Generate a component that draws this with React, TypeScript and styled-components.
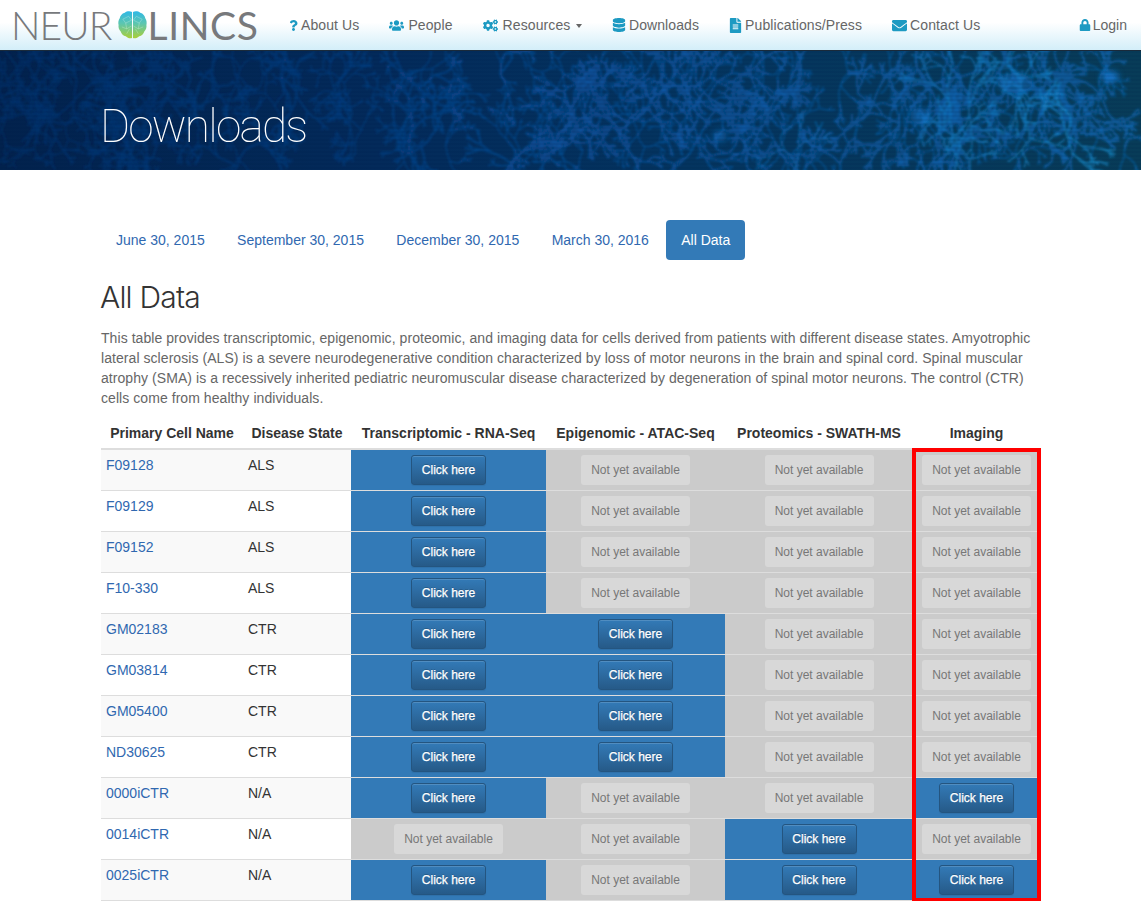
import { createGlobalStyle } from "styled-components"
import styled from "styled-components"
import { FaQuestion, FaUsers, FaCogs, FaDatabase, FaFileAlt, FaEnvelope, FaLock } from "react-icons/fa"

const GlobalStyle = createGlobalStyle`
    html, body {
        margin: 0;
        padding: 0;
        background: #fff;
        font-family: "Liberation Sans", Arial, sans-serif;
        font-size: 14px;
        line-height: 20px;
        color: #333;
    }
    * { box-sizing: border-box; }
`

// seeded so the banner comes out the same each time
const makeRng = (seed: number) => () => {
    seed |= 0
    seed = (seed + 0x6d2b79f5) | 0
    let t = Math.imul(seed ^ (seed >>> 15), 1 | seed)
    t = (t + Math.imul(t ^ (t >>> 7), 61 | t)) ^ t
    return ((t ^ (t >>> 14)) >>> 0) / 4294967296
}

const growBranch = (rng: () => number, x: number, y: number, angle: number, len: number, depth: number, out: string[]) => {
    let cx = x, cy = y, a = angle
    let d = `M${cx.toFixed(1)} ${cy.toFixed(1)}`
    const steps = 2 + Math.floor(rng() * 3)
    for (let i = 0; i < steps; i++) {
        a += (rng() - 0.5) * 0.7
        cx += Math.cos(a) * len / steps
        cy += Math.sin(a) * len / steps
        d += `L${cx.toFixed(1)} ${cy.toFixed(1)}`
    }
    out.push(d)
    if (depth > 0) {
        for (let k = 0; k < 2; k++) {
            growBranch(rng, cx, cy, a + (rng() - 0.5) * 1.9, len * (0.6 + rng() * 0.25), depth - 1, out)
        }
    }
}

// mostly up and down arms, the fibres in the photo run vertically
const buildNeurons = (seed: number, count: number, xMin: number, xMax: number, len: number) => {
    const rng = makeRng(seed)
    const out: string[] = []
    for (let n = 0; n < count; n++) {
        const x = xMin + rng() * (xMax - xMin)
        const y = rng() * 119
        const arms = 3 + Math.floor(rng() * 2)
        for (let i = 0; i < arms; i++) {
            const up = i % 2 === 0 ? -Math.PI / 2 : Math.PI / 2
            growBranch(rng, x, y, up + (rng() - 0.5) * 1.6, len, 3, out)
        }
    }
    return out.join("")
}

const thickFibres = buildNeurons(11, 56, 0, 1141, 20)
const thinFibres = buildNeurons(29, 90, 0, 1141, 15)
const brightFibres = buildNeurons(47, 8, 780, 1141, 20)

const scanLines = Array.from({ length: 30 }, (_, i) => `M0 ${i * 4 + 1}H1141`).join("")

const rows = [
    ["F09128", "ALS", 1, 0, 0, 0],
    ["F09129", "ALS", 1, 0, 0, 0],
    ["F09152", "ALS", 1, 0, 0, 0],
    ["F10-330", "ALS", 1, 0, 0, 0],
    ["GM02183", "CTR", 1, 1, 0, 0],
    ["GM03814", "CTR", 1, 1, 0, 0],
    ["GM05400", "CTR", 1, 1, 0, 0],
    ["ND30625", "CTR", 1, 1, 0, 0],
    ["0000iCTR", "N/A", 1, 0, 0, 1],
    ["0014iCTR", "N/A", 0, 0, 1, 0],
    ["0025iCTR", "N/A", 1, 0, 1, 1],
] as const

const navItems = [
    { label: "About Us", icon: <FaQuestion size={11} />, width: 8, gap: 4 },
    { label: "People", icon: <FaUsers size={15} />, width: 15, gap: 4 },
    { label: "Resources", icon: <FaCogs size={15} />, width: 15, gap: 5, caret: true },
    { label: "Downloads", icon: <FaDatabase size={14} />, width: 12.5, gap: 4 },
    { label: "Publications/Press", icon: <FaFileAlt size={15} />, width: 12, gap: 4 },
    { label: "Contact Us", icon: <FaEnvelope size={15} />, width: 14, gap: 4 },
]

const App = () => {
    return (
        <>
            <GlobalStyle />
            <Navbar>
                <Logo>
                    <LogoWord>NEUR</LogoWord>
                    <Brain />
                    <LogoWord $strong>LINCS</LogoWord>
                </Logo>
                <NavList>
                    {navItems.map(item => (
                        <NavItem key={item.label}>
                            <NavIcon $width={item.width} $gap={item.gap}>{item.icon}</NavIcon>
                            {item.label}
                            {item.caret && <Caret />}
                        </NavItem>
                    ))}
                </NavList>
                <LoginItem>
                    <NavIcon $width={10} $gap={3}><FaLock size={12} /></NavIcon>
                    Login
                </LoginItem>
            </Navbar>
            <Banner>
                <BannerArt viewBox="0 0 1141 119" preserveAspectRatio="none">
                    <defs>
                        <linearGradient id="bannerBg" x1="0" y1="0" x2="1" y2="0">
                            <stop offset="0" stopColor="#02224d" />
                            <stop offset="0.33" stopColor="#032a5a" />
                            <stop offset="0.6" stopColor="#04345f" />
                            <stop offset="1" stopColor="#083c58" />
                        </linearGradient>
                        <linearGradient id="fibre" gradientUnits="userSpaceOnUse" x1="0" y1="0" x2="1141" y2="0">
                            <stop offset="0" stopColor="#06316c" />
                            <stop offset="0.3" stopColor="#083f84" />
                            <stop offset="0.5" stopColor="#0b55a3" />
                            <stop offset="1" stopColor="#0f6ab8" />
                        </linearGradient>
                        <linearGradient id="bright" gradientUnits="userSpaceOnUse" x1="780" y1="0" x2="1141" y2="119">
                            <stop offset="0" stopColor="#0f69b8" />
                            <stop offset="1" stopColor="#1a96d6" />
                        </linearGradient>
                        <filter id="soft"><feGaussianBlur stdDeviation="0.8" /></filter>
                        <filter id="glow"><feGaussianBlur stdDeviation="3" /></filter>
                    </defs>
                    <rect width="1141" height="119" fill="url(#bannerBg)" />
                    <g fill="none" filter="url(#soft)">
                        <path d={thickFibres} stroke="url(#fibre)" strokeWidth="2" opacity="0.65" />
                        <path d={thinFibres} stroke="url(#fibre)" strokeWidth="1.1" opacity="0.75" />
                        <path d={brightFibres} stroke="url(#bright)" strokeWidth="1.3" opacity="0.7" />
                    </g>
                    <g filter="url(#glow)" fill="#1272c4">
                        <ellipse cx="1110" cy="26" rx="9" ry="6" />
                        <ellipse cx="1015" cy="32" rx="18" ry="10" opacity="0.5" />
                        <ellipse cx="920" cy="65" rx="10" ry="8" opacity="0.6" />
                        <ellipse cx="720" cy="85" rx="7" ry="6" opacity="0.6" />
                    </g>
                    <path d={scanLines} stroke="#02244f" strokeWidth="1" opacity="0.15" />
                </BannerArt>
                <BannerTitle>Downloads</BannerTitle>
            </Banner>
            <Main>
                <Pills>
                    <Pill>June 30, 2015</Pill>
                    <Pill>September 30, 2015</Pill>
                    <Pill>December 30, 2015</Pill>
                    <Pill>March 30, 2016</Pill>
                    <Pill $active>All Data</Pill>
                </Pills>
                <Heading>All Data</Heading>
                <Intro>
                    This table provides transcriptomic, epigenomic, proteomic, and imaging data for cells derived from patients with different disease states. Amyotrophic lateral sclerosis (ALS) is a severe neurodegenerative condition characterized by loss of motor neurons in the brain and spinal cord. Spinal muscular atrophy (SMA) is a recessively inherited pediatric neuromuscular disease characterized by degeneration of spinal motor neurons. The control (CTR) cells come from healthy individuals.
                </Intro>
                <TableWrap>
                    <DataTable>
                        <colgroup>
                            <col width="142" />
                            <col width="108" />
                            <col width="195" />
                            <col width="179" />
                            <col width="188" />
                            <col width="127" />
                        </colgroup>
                        <thead>
                            <tr>
                                <HeadCell>Primary Cell Name</HeadCell>
                                <HeadCell>Disease State</HeadCell>
                                <HeadCell>Transcriptomic - RNA-Seq</HeadCell>
                                <HeadCell>Epigenomic - ATAC-Seq</HeadCell>
                                <HeadCell>Proteomics - SWATH-MS</HeadCell>
                                <HeadCell>Imaging</HeadCell>
                            </tr>
                        </thead>
                        <tbody>
                            {rows.map((row, i) => (
                                <tr key={row[0]}>
                                    <TextCell $striped={i % 2 === 0}><CellLink>{row[0]}</CellLink></TextCell>
                                    <TextCell $striped={i % 2 === 0}>{row[1]}</TextCell>
                                    {row.slice(2).map((flag, c) => (
                                        <StatusCell key={c} $ready={!!flag}>
                                            {flag ? <ClickButton>Click here</ClickButton> : <PendingButton>Not yet available</PendingButton>}
                                        </StatusCell>
                                    ))}
                                </tr>
                            ))}
                        </tbody>
                    </DataTable>
                    <Highlight />
                </TableWrap>
            </Main>
        </>
    )
}

const Brain = () => (
    <BrainSvg viewBox="0 0 30 30">
        <defs>
            <linearGradient id="brainFill" x1="0" y1="0" x2="0" y2="1">
                <stop offset="0" stopColor="#2fb8e6" />
                <stop offset="0.45" stopColor="#5cc6b0" />
                <stop offset="1" stopColor="#a9cf38" />
            </linearGradient>
        </defs>
        <path fill="url(#brainFill)" d="M14.5 1.5C12 0.4 9 0.8 7 2.2 4 3 2.2 5.4 1.8 8 0.4 10 0 12.6 0.6 15c-.4 2.4.4 4.8 2.2 6.6.8 2.6 2.8 4.4 5.2 5 1.8 1.8 4.4 2.6 6.5 1.8V1.5zM15.5 1.5c2.5-1.1 5.5-.7 7.5.7 3 .8 4.8 3.2 5.2 5.8 1.4 2 1.8 4.6 1.2 7 .4 2.4-.4 4.8-2.2 6.6-.8 2.6-2.8 4.4-5.2 5-1.8 1.8-4.4 2.6-6.5 1.8V1.5z" />
        <g fill="none" stroke="#fff" strokeWidth="0.5" opacity="0.5">
            <path d="M5 9l6-3 3 4-6 3zM25 9l-6-3-3 4 6 3zM4 17l5 2 5-3M26 17l-5 2-5-3M9 24l3-5M21 24l-3-5M8 13l1 6M22 13l-1 6" />
        </g>
    </BrainSvg>
)

const Navbar = styled.nav`
    display: flex;
    align-items: center;
    height: 51px;
    background: linear-gradient(to bottom, #fff 0, #fff 45%, #d3eef9 100%);
    border-bottom: 1px solid #1a2a3a;
`

const Logo = styled.a`
    display: flex;
    align-items: center;
    width: 274px;
    padding-left: 11px;
    flex: none;
`

const LogoWord = styled.span<{ $strong?: boolean }>`
    font-family: Lato, "Liberation Sans", sans-serif;
    font-size: 39px;
    line-height: 50px;
    font-weight: ${props => props.$strong ? 400 : 300};
    letter-spacing: ${props => props.$strong ? "0.6px" : "-0.9px"};
    color: #77797c;
`

const BrainSvg = styled.svg`
    width: 29px;
    height: 30px;
    margin: 0 1px 0 6px;
    flex: none;
`

const NavList = styled.div`
    display: flex;
    flex: 1;
`

const NavItem = styled.a`
    display: flex;
    align-items: center;
    padding: 0 15px;
    letter-spacing: 0.1px;
    color: #666;
    white-space: nowrap;
`

const LoginItem = styled(NavItem)`
    padding: 0 14px 0 0;
    letter-spacing: 0;
`

const NavIcon = styled.span<{ $width: number; $gap: number }>`
    display: inline-flex;
    align-items: center;
    justify-content: center;
    flex: none;
    width: ${props => props.$width}px;
    margin-right: ${props => props.$gap}px;
    color: #1d9ac2;
    svg { flex: none; }
`

const Caret = styled.span`
    width: 0;
    height: 0;
    margin-left: 6px;
    margin-top: 2px;
    border-top: 4px solid #666;
    border-left: 3.5px solid transparent;
    border-right: 3.5px solid transparent;
`

const Banner = styled.header`
    position: relative;
    display: flex;
    align-items: center;
    height: 119px;
    padding: 30px 0 0 100px;
    overflow: hidden;
    background: #02244f;
`

const BannerArt = styled.svg`
    position: absolute;
    inset: 0;
    width: 100%;
    height: 100%;
`

const BannerTitle = styled.h1`
    position: relative;
    margin: 0;
    font-family: Roboto, "Liberation Sans", sans-serif;
    font-size: 46px;
    line-height: 50px;
    font-weight: 100;
    letter-spacing: -1.8px;
    color: #fff;
`

const Main = styled.main`
    padding: 50px 100px 0 101px;
`

const Pills = styled.div`
    display: flex;
    gap: 2.35px;
`

const Pill = styled.a<{ $active?: boolean }>`
    padding: 10px 15px;
    border-radius: 4px;
    color: ${props => props.$active ? "#fff" : "#3068b0"};
    background: ${props => props.$active ? "#337ab7" : "transparent"};
`

const Heading = styled.h2`
    margin: 21px 0 14px -1px;
    font-family: Inter, "Liberation Sans", sans-serif;
    font-size: 30px;
    line-height: 33px;
    font-weight: 300;
    letter-spacing: -0.8px;
    color: #333;
`

const Intro = styled.p`
    margin: 0 0 10px;
    letter-spacing: 0.06px;
    color: #666;
`

const TableWrap = styled.div`
    position: relative;
    width: 939px;
`

const DataTable = styled.table`
    width: 939px;
    table-layout: fixed;
    border-collapse: collapse;
    border-spacing: 0;
`

const HeadCell = styled.th`
    padding: 5px 0;
    text-align: center;
    font-weight: 700;
    white-space: nowrap;
    border-bottom: 2px solid #ddd;
`

const TextCell = styled.td<{ $striped?: boolean }>`
    padding: 5px;
    height: 41px;
    vertical-align: top;
    border-top: 1px solid #ddd;
    border-bottom: 1px solid #ddd;
    background: ${props => props.$striped ? "#f9f9f9" : "#fff"};
`

const StatusCell = styled.td<{ $ready: boolean }>`
    padding: 5px 0;
    height: 41px;
    text-align: center;
    vertical-align: top;
    border-top: 1px solid #ddd;
    border-bottom: 1px solid #ddd;
    background: ${props => props.$ready ? "#337ab7" : "#cbcbcb"};
`

const CellLink = styled.a`
    color: #3068b0;
`

const ClickButton = styled.a`
    display: inline-block;
    vertical-align: top;
    height: 30px;
    width: 75px;
    font-size: 12px;
    line-height: 28px;
    text-align: center;
    color: #fff;
    -webkit-text-stroke: 0.25px #fff;
    text-shadow: 0 -1px 0 rgba(0, 0, 0, .2);
    background: linear-gradient(to bottom, #337ab7 0, #265a88 100%);
    border: 1px solid #245580;
    border-radius: 3px;
    box-shadow: inset 0 1px 0 rgba(255, 255, 255, .15), 0 1px 1px rgba(0, 0, 0, .075);
`

const PendingButton = styled.span`
    display: inline-block;
    vertical-align: top;
    height: 30px;
    width: 109px;
    font-size: 12px;
    line-height: 30px;
    text-align: center;
    color: #777;
    background: #d8d8d8;
    border-radius: 3px;
`

const Highlight = styled.div`
    position: absolute;
    top: 30px;
    bottom: -1px;
    left: 811px;
    width: 129px;
    border: 4px solid #f00;
    pointer-events: none;
`

export default App
